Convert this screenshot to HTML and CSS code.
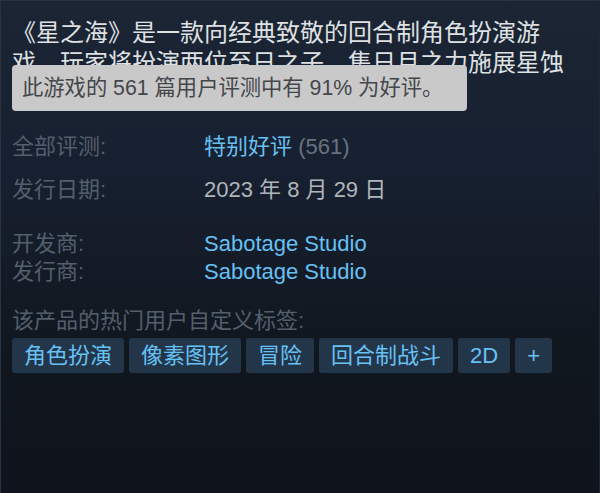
FILE: index.html
```html
<!DOCTYPE html>
<html lang="zh-CN">
<head>
<meta charset="utf-8">
<link rel="stylesheet" href="styles.css">
</head>
<body>
<div class="panel">
  <p class="desc">《星之海》是一款向经典致敬的回合制角色扮演游戏，玩家将扮演两位至日之子，集日月之力施展星蚀魔法。</p>
  <div class="tooltip">此游戏的 561 篇用户评测中有 91% 为好评。</div>

  <div class="rows">
    <div class="row r-review">
      <span class="label">全部评测:</span>
      <span class="value"><span class="link">特别好评</span> <span class="count">(561)</span></span>
    </div>
    <div class="row r-date">
      <span class="label">发行日期:</span>
      <span class="value date">2023 年 8 月 29 日</span>
    </div>
    <div class="row">
      <span class="label">开发商:</span>
      <span class="value link">Sabotage Studio</span>
    </div>
    <div class="row">
      <span class="label">发行商:</span>
      <span class="value link">Sabotage Studio</span>
    </div>
  </div>

  <div class="tags-label">该产品的热门用户自定义标签:</div>
  <div class="tags">
    <span class="tag">角色扮演</span>
    <span class="tag">像素图形</span>
    <span class="tag">冒险</span>
    <span class="tag">回合制战斗</span>
    <span class="tag">2D</span>
    <span class="tag">+</span>
  </div>
</div>
</body>
</html>
```
FILE: styles.css
```css
html, body {
  margin: 0;
  padding: 0;
  height: 100%;
}
body {
  background: #0f141d;
  font-family: "Liberation Sans", Arial, "Noto Sans CJK SC", sans-serif;
}
.panel {
  position: relative;
  box-sizing: border-box;
  width: 600px;
  height: 493px;
  padding: 17px 11px 0 11px;
  background: linear-gradient(180deg, #1c2534 0%, #172030 35%, #11171f 70%, #0e131c 100%);
  border-top: 1px solid #2a3342;
  border-left: 1px solid #2a3342;
  border-right: 1px solid #1f2733;
  overflow: hidden;
}
.desc {
  margin: 0;
  width: 560px;
  font-size: 24px;
  line-height: 30px;
  color: #dfe1e3;
}
.tooltip {
  position: absolute;
  left: 11px;
  top: 64px;
  width: 455px;
  height: 46px;
  box-sizing: border-box;
  padding-left: 10px;
  background: #c9c9c9;
  border-radius: 4px;
  color: #444649;
  font-size: 21.3px;
  line-height: 46px;
  white-space: nowrap;
}
.rows {
  margin-top: 25px;
  display: flex;
  flex-direction: column;
}
.row {
  display: grid;
  grid-template-columns: 192px auto;
  font-size: 22px;
  line-height: 28px;
}
.r-review { margin-bottom: 15px; }
.r-date { margin-bottom: 26px; }
.label {
  color: #535f6c;
}
.link {
  color: #66c0f4;
}
.count {
  color: #67737f;
}
.date {
  color: #b0b5ba;
}
.tags-label {
  margin-top: 21px;
  font-size: 22px;
  line-height: 28px;
  color: #535f6c;
}
.tags {
  margin-top: 3px;
  display: flex;
  gap: 5px;
}
.tag {
  height: 35px;
  line-height: 35px;
  padding: 0 12px;
  border-radius: 3px;
  background: #233649;
  color: #67c1f5;
  font-size: 22px;
}
```
